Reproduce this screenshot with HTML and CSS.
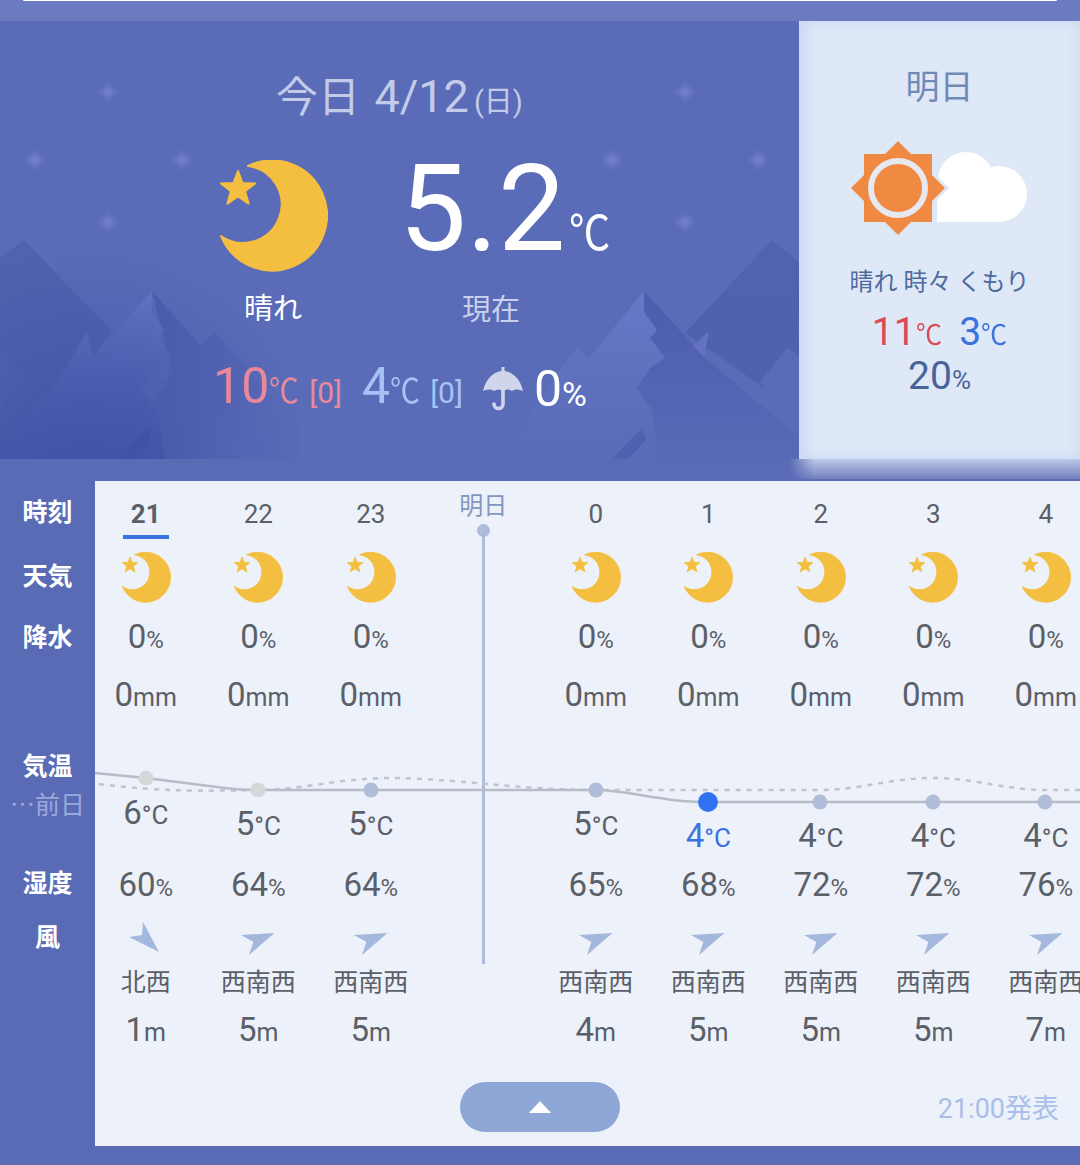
FILE: index.html
```html
<!DOCTYPE html>
<html lang="ja">
<head>
  <meta charset="UTF-8">
  <title>天気予報</title>
  <link rel="stylesheet" href="styles.css">
</head>
<body>
  <svg class="defs" width="0" height="0">
    <symbol id="moon" viewBox="0 0 110 112">
      <path fill="#f4bf40" stroke="#f4bf40" stroke-width="2" stroke-linejoin="round" d="M30 6A38.6 38.6 0 1 1 3 76A55 55 0 1 0 30 6Z"/>
      <path fill="#f4bf40" stroke="#f4bf40" stroke-width="2" stroke-linejoin="round" d="M20 11L24.4 22.9L37.1 23.4L27.1 31.3L30.6 43.6L20 36.5L9.4 43.6L12.9 31.3L2.9 23.4L15.6 22.9Z"/>
    </symbol>
    <symbol id="wind-wsw" viewBox="-18 -20 36 40">
      <path fill="#a3b8dc" d="M-17-5L16.5-7L-9 15L-4.6 2Z"/>
    </symbol>
    <symbol id="wind-nw" viewBox="-18 -20 36 40">
      <path fill="#a3b8dc" d="M-17-3L-4-5L-3-18L13 12Z"/>
    </symbol>
  </svg>

  <div class="topbar"><div class="topbar-edge"></div></div>

  <section class="hero">
    <div class="today">
      <svg class="scenery" viewBox="0 21 799 438" width="799" height="438">
        <defs>
          <linearGradient id="tree-left" gradientUnits="userSpaceOnUse" x1="0" y1="291" x2="0" y2="459">
            <stop offset="0" stop-color="#6778c6"/>
            <stop offset=".5" stop-color="#5768b8"/>
            <stop offset="1" stop-color="#4858a9"/>
          </linearGradient>
          <linearGradient id="tree-right" gradientUnits="userSpaceOnUse" x1="0" y1="291" x2="0" y2="459">
            <stop offset="0" stop-color="#6778c6"/>
            <stop offset=".6" stop-color="#5e6fbc"/>
            <stop offset="1" stop-color="#5a6bb8"/>
          </linearGradient>
          <linearGradient id="back-left" gradientUnits="userSpaceOnUse" x1="150" y1="300" x2="250" y2="440">
            <stop offset="0" stop-color="#4b5cad"/>
            <stop offset="1" stop-color="#4f60b0" stop-opacity="0"/>
          </linearGradient>
          <linearGradient id="back-right" gradientUnits="userSpaceOnUse" x1="0" y1="291" x2="0" y2="459">
            <stop offset="0" stop-color="#4c5dae"/>
            <stop offset=".6" stop-color="#5364b2"/>
            <stop offset="1" stop-color="#5869b6"/>
          </linearGradient>
          <linearGradient id="peak" gradientUnits="userSpaceOnUse" x1="0" y1="240" x2="0" y2="440">
            <stop offset="0" stop-color="#5162ae"/>
            <stop offset="1" stop-color="#4f60ad"/>
          </linearGradient>
          <radialGradient id="dusk" gradientUnits="userSpaceOnUse" cx="90" cy="475" r="230">
            <stop offset="0" stop-color="#4151a6" stop-opacity=".85"/>
            <stop offset="1" stop-color="#4151a6" stop-opacity="0"/>
          </radialGradient>
          <filter id="soft" x="-30%" y="-30%" width="160%" height="160%">
            <feGaussianBlur stdDeviation="1.4"/>
          </filter>
        </defs>
        <path fill="url(#peak)" d="M0 258L24 240L112 331L60 400L0 440Z"/>
        <path fill="#5364b2" d="M0 350L25 375L0 410Z"/>
        <path fill="url(#back-left)" d="M152 291L200 345L215 332L262 385L250 459H120L172 372Z"/>
        <path fill="url(#tree-left)" d="M152 291V312L164 330L158 338L172 358L155 372L141 388L158 415L165 459H0V440L55 385L87 332L93 357Z"/>
        <path fill="#4253a7" d="M147 428L152 442L134 459H120Z"/>

        <path fill="url(#peak)" d="M772 240L799 262V420L760 385L685 333Z"/>
        <path fill="#5a6bb8" d="M788 347L799 357V440L760 382Z"/>
        <path fill="url(#back-right)" d="M644 291L705 358L799 437V459H640L625 400Z"/>
        <path fill="url(#tree-right)" d="M644 291V312L657 330L650 338L665 358L650 368L637 388L652 410L658 459H505L555 375L578 347L587 358L590 357Z"/>
        <path fill="#6373c2" d="M709 331L693 346L704 357Z"/>
        <path fill="#5061b0" d="M642 428L646 440L628 459H612Z"/>
        <rect x="0" y="240" width="300" height="219" fill="url(#dusk)"/>

        <g filter="url(#soft)" fill="#6272bd">
          <path d="M108 81l11 11l-11 11l-11-11Z"/>
          <path d="M35 149l11 11l-11 11l-11-11Z"/>
          <path d="M182 149l11 11l-11 11l-11-11Z"/>
          <path d="M108 211l11 11l-11 11l-11-11Z"/>
          <path d="M685 81l11 11l-11 11l-11-11Z"/>
          <path d="M612 149l11 11l-11 11l-11-11Z"/>
          <path d="M759 149l11 11l-11 11l-11-11Z"/>
          <path d="M685 211l11 11l-11 11l-11-11Z"/>
        </g>
        <g filter="url(#soft)" fill="#6f7fc8">
          <path d="M108 86l6 6l-6 6l-6-6Z"/>
          <path d="M35 154l6 6l-6 6l-6-6Z"/>
          <path d="M182 154l6 6l-6 6l-6-6Z"/>
          <path d="M108 216l6 6l-6 6l-6-6Z"/>
          <path d="M685 86l6 6l-6 6l-6-6Z"/>
          <path d="M612 154l6 6l-6 6l-6-6Z"/>
          <path d="M759 154l6 6l-6 6l-6-6Z"/>
          <path d="M685 216l6 6l-6 6l-6-6Z"/>
        </g>
      </svg>
      <div class="today-inner">
        <h1 class="today-title">今日 <span class="today-date">4/12</span><small>(日)</small></h1>
        <div class="now-row">
          <div class="now-weather">
            <svg class="moon-big"><use href="#moon"/></svg>
            <div class="now-label">晴れ</div>
          </div>
          <div class="now-temp">
            <div class="temp-big">5.2<span>℃</span></div>
            <div class="now-label muted">現在</div>
          </div>
        </div>
        <div class="stats">
          <span class="stat-hi">10<i>℃</i><b>[0]</b></span>
          <span class="stat-lo">4<i>℃</i><b>[0]</b></span>
          <svg class="umbrella" viewBox="0 0 40 44" width="40" height="44">
            <path fill="#d0d5ea" d="M0 24C3 11 11 5 18.5 4V0H21.5V4C29 5 37 11 40 24C36 22 32 22 29 24C26 22 23 22 20 24C17 22 14 22 11 24C8 22 4 22 0 24Z"/>
            <path fill="none" stroke="#d0d5ea" stroke-width="3.6" stroke-linecap="round" d="M20 22V37a4.5 4.5 0 0 1-9 0"/>
          </svg>
          <span class="stat-rain">0<i>%</i></span>
        </div>
      </div>
    </div>

    <div class="tomorrow">
      <h2 class="tomorrow-title">明日</h2>
      <svg class="tomorrow-icon" viewBox="851 141 176 94" width="176" height="94">
        <g fill="#fff">
          <circle cx="966" cy="180" r="28"/>
          <circle cx="999" cy="194" r="28"/>
          <rect x="937" y="180" width="60" height="42"/>
        </g>
        <path fill="#dfe8f7" stroke="#dfe8f7" stroke-width="6" d="M864 154H885L898 141L911 154H932V175L945 188L932 201V222H911L898 235L885 222H864V201L851 188L864 175Z"/>
        <path fill="#f08a42" d="M864 154H885L898 141L911 154H932V175L945 188L932 201V222H911L898 235L885 222H864V201L851 188L864 175Z"/>
        <circle cx="898" cy="188" r="27" fill="#f08a42" stroke="#e6e9ef" stroke-width="6"/>
      </svg>
      <div class="tomorrow-desc">晴れ 時々 くもり</div>
      <div class="tomorrow-temps">
        <span class="t-hi">11<i>℃</i></span>
        <span class="t-lo">3<i>℃</i></span>
      </div>
      <div class="tomorrow-rain">20<i>%</i></div>
    </div>
  </section>

  <div class="hero-foot"><div class="hero-foot-right"></div></div>

  <section class="forecast">
    <aside class="labels">
      <div>時刻</div>
      <div>天気</div>
      <div>降水</div>
      <div>気温</div>
      <div class="label-prev">⋯前日</div>
      <div>湿度</div>
      <div>風</div>
    </aside>

    <div class="panel">
      <svg class="chart" viewBox="95 730 985 110" width="985" height="110">
        <path class="chart-prev" d="M99 784C160 792 210 791 258 790C300 790 340 778 390 778C450 778 520 790 596 790H820C860 790 890 778 933 778C975 778 1005 790 1045 790H1080"/>
        <path class="chart-line" d="M95 773L146 778L225 788Q240 790 258 790H596C620 790 640 796 660 798Q680 802 708 802H1080"/>
        <circle cx="146" cy="778" r="7.5" fill="#d5d7d8"/>
        <circle cx="258" cy="790" r="7.5" fill="#d5d7d8"/>
        <circle cx="371" cy="790" r="7.5" fill="#afbdd9"/>
        <circle cx="596" cy="790" r="7.5" fill="#afbdd9"/>
        <circle cx="708" cy="802" r="10" fill="#3172f0"/>
        <circle cx="820" cy="802" r="7.5" fill="#afbdd9"/>
        <circle cx="933" cy="802" r="7.5" fill="#afbdd9"/>
        <circle cx="1045" cy="802" r="7.5" fill="#afbdd9"/>
      </svg>

      <div class="hours">
        <div class="col now">
          <div class="c-hour"><b>21</b></div>
          <div class="c-icon"><svg class="moon-small"><use href="#moon"/></svg></div>
          <div class="c-pct">0<i>%</i></div>
          <div class="c-mm">0<i>mm</i></div>
          <div class="c-temp t6">6<i>°C</i></div>
          <div class="c-hum">60<i>%</i></div>
          <div class="c-wind"><svg class="wind"><use href="#wind-nw"/></svg></div>
          <div class="c-dir">北西</div>
          <div class="c-speed">1<i>m</i></div>
        </div>
        <div class="col">
          <div class="c-hour">22</div>
          <div class="c-icon"><svg class="moon-small"><use href="#moon"/></svg></div>
          <div class="c-pct">0<i>%</i></div>
          <div class="c-mm">0<i>mm</i></div>
          <div class="c-temp t5">5<i>°C</i></div>
          <div class="c-hum">64<i>%</i></div>
          <div class="c-wind"><svg class="wind"><use href="#wind-wsw"/></svg></div>
          <div class="c-dir">西南西</div>
          <div class="c-speed">5<i>m</i></div>
        </div>
        <div class="col">
          <div class="c-hour">23</div>
          <div class="c-icon"><svg class="moon-small"><use href="#moon"/></svg></div>
          <div class="c-pct">0<i>%</i></div>
          <div class="c-mm">0<i>mm</i></div>
          <div class="c-temp t5">5<i>°C</i></div>
          <div class="c-hum">64<i>%</i></div>
          <div class="c-wind"><svg class="wind"><use href="#wind-wsw"/></svg></div>
          <div class="c-dir">西南西</div>
          <div class="c-speed">5<i>m</i></div>
        </div>
        <div class="col day-mark">
          <div class="day-label">明日</div>
          <div class="day-dot"></div>
          <div class="day-line"></div>
        </div>
        <div class="col">
          <div class="c-hour">0</div>
          <div class="c-icon"><svg class="moon-small"><use href="#moon"/></svg></div>
          <div class="c-pct">0<i>%</i></div>
          <div class="c-mm">0<i>mm</i></div>
          <div class="c-temp t5">5<i>°C</i></div>
          <div class="c-hum">65<i>%</i></div>
          <div class="c-wind"><svg class="wind"><use href="#wind-wsw"/></svg></div>
          <div class="c-dir">西南西</div>
          <div class="c-speed">4<i>m</i></div>
        </div>
        <div class="col">
          <div class="c-hour">1</div>
          <div class="c-icon"><svg class="moon-small"><use href="#moon"/></svg></div>
          <div class="c-pct">0<i>%</i></div>
          <div class="c-mm">0<i>mm</i></div>
          <div class="c-temp t4 lowest">4<i>°C</i></div>
          <div class="c-hum">68<i>%</i></div>
          <div class="c-wind"><svg class="wind"><use href="#wind-wsw"/></svg></div>
          <div class="c-dir">西南西</div>
          <div class="c-speed">5<i>m</i></div>
        </div>
        <div class="col">
          <div class="c-hour">2</div>
          <div class="c-icon"><svg class="moon-small"><use href="#moon"/></svg></div>
          <div class="c-pct">0<i>%</i></div>
          <div class="c-mm">0<i>mm</i></div>
          <div class="c-temp t4">4<i>°C</i></div>
          <div class="c-hum">72<i>%</i></div>
          <div class="c-wind"><svg class="wind"><use href="#wind-wsw"/></svg></div>
          <div class="c-dir">西南西</div>
          <div class="c-speed">5<i>m</i></div>
        </div>
        <div class="col">
          <div class="c-hour">3</div>
          <div class="c-icon"><svg class="moon-small"><use href="#moon"/></svg></div>
          <div class="c-pct">0<i>%</i></div>
          <div class="c-mm">0<i>mm</i></div>
          <div class="c-temp t4">4<i>°C</i></div>
          <div class="c-hum">72<i>%</i></div>
          <div class="c-wind"><svg class="wind"><use href="#wind-wsw"/></svg></div>
          <div class="c-dir">西南西</div>
          <div class="c-speed">5<i>m</i></div>
        </div>
        <div class="col">
          <div class="c-hour">4</div>
          <div class="c-icon"><svg class="moon-small"><use href="#moon"/></svg></div>
          <div class="c-pct">0<i>%</i></div>
          <div class="c-mm">0<i>mm</i></div>
          <div class="c-temp t4">4<i>°C</i></div>
          <div class="c-hum">76<i>%</i></div>
          <div class="c-wind"><svg class="wind"><use href="#wind-wsw"/></svg></div>
          <div class="c-dir">西南西</div>
          <div class="c-speed">7<i>m</i></div>
        </div>
      </div>

      <div class="panel-foot">
        <button class="collapse" type="button"><span class="collapse-arrow"></span></button>
        <div class="issued">21:00発表</div>
      </div>
    </div>
  </section>
</body>
</html>
```

FILE: styles.css
```css
html, body {
  margin: 0;
  padding: 0;
}
body {
  width: 1080px;
  height: 1165px;
  overflow: hidden;
  background: #5a6bb5;
  font-family: Roboto, "Noto Sans CJK JP", sans-serif;
}
i {
  font-style: normal;
}
.defs {
  position: absolute;
}

/* top strip */
.topbar {
  height: 21px;
  background: #6b7bc2;
  padding: 0 23px 0 23px;
}
.topbar-edge {
  height: 1px;
  background: #fff;
  border-radius: 0 0 6px 6px;
}

/* today + tomorrow */
.hero {
  display: flex;
  height: 438px;
}
.today {
  position: relative;
  width: 799px;
  background: #5a6cb7;
  overflow: hidden;
}
.scenery {
  position: absolute;
  left: 0;
  top: 0;
}
.today-inner {
  position: relative;
  padding-top: 50px;
}
.today-title {
  margin: 0;
  text-align: center;
  font-size: 42px;
  line-height: 52px;
  font-weight: 400;
  color: #c3cbe8;
}
.today-date {
  font-size: 45px;
  font-weight: 400;
  margin-left: 4px;
}
.today-title small {
  font-size: 29px;
  font-weight: 400;
  margin-left: 5px;
}
.now-row {
  display: flex;
  margin-top: 32px;
  padding-left: 218px;
}
.now-weather {
  width: 110px;
}
.moon-big {
  display: block;
  width: 110px;
  height: 112px;
}
.now-label {
  font-size: 29px;
  line-height: 36px;
  color: #fff;
  text-align: center;
  margin-top: 19px;
}
.now-label.muted {
  color: #c9d0ec;
  width: 184px;
  margin-top: 34px;
}
.now-temp {
  margin-left: 71px;
  padding-top: 1px;
}
.temp-big {
  font-size: 120px;
  line-height: 96px;
  color: #fff;
  white-space: nowrap;
}
.temp-big span {
  display: inline-block;
  font-size: 48px;
  line-height: 48px;
  transform: scaleX(.86);
  transform-origin: 0 100%;
  margin-left: 3px;
}
.stats {
  display: flex;
  justify-content: center;
  align-items: center;
  margin-top: 33px;
  padding-left: 1px;
  height: 56px;
  font-size: 50px;
  line-height: 56px;
}
.stats i {
  display: inline-block;
  font-size: 34px;
  line-height: 34px;
  transform: scaleX(.88);
  transform-origin: 0 100%;
  margin-right: -4px;
}
.stats b {
  font-size: 30px;
  font-weight: 400;
  margin-left: 10px;
}
.stat-hi {
  color: #e8899b;
}
.stat-lo {
  color: #a6c2f5;
  margin-left: 20px;
}
.umbrella {
  margin: 0 11px 0 20px;
}
.stat-rain {
  color: #fff;
}
.stats .stat-rain i {
  transform: none;
  margin-right: 0;
}

.tomorrow {
  flex: 1;
  background: #dfe8f7;
  box-shadow: inset 8px 0 14px #cbd9f4, inset -6px 0 10px #d5e0f3;
  text-align: center;
  color: #4e6a9c;
}
.tomorrow-title {
  margin: 0;
  padding-top: 44px;
  font-size: 34px;
  line-height: 44px;
  font-weight: 400;
  color: #6f8ab8;
}
.tomorrow-icon {
  display: block;
  margin: 32px 0 0 52px;
}
.tomorrow-desc {
  margin-top: 29px;
  font-size: 24px;
  line-height: 36px;
}
.tomorrow-temps {
  margin-top: 9px;
  font-size: 39px;
  line-height: 46px;
}
.tomorrow-temps i {
  display: inline-block;
  font-size: 28px;
  line-height: 28px;
  transform: scaleX(.93);
  transform-origin: 0 100%;
  margin-right: -2px;
}
.t-hi {
  color: #dc4a55;
}
.t-lo {
  color: #3b72dc;
  margin-left: 8px;
}
.tomorrow-rain {
  margin-top: -1px;
  font-size: 39px;
  line-height: 44px;
  color: #466498;
}
.tomorrow-rain i {
  font-size: 26px;
}

.hero-foot {
  display: flex;
  justify-content: flex-end;
  height: 21px;
  background: #5a6bb5;
  margin-bottom: 1px;
}
.hero-foot-right {
  width: 290px;
  background:
    linear-gradient(90deg, #5a6cb7, rgba(90, 108, 183, 0) 24px),
    linear-gradient(180deg, #bdc9e7, #7280bf 95%, #4f5fa8);
}

/* hourly table */
.forecast {
  display: flex;
  height: 665px;
}
.labels {
  width: 95px;
  flex: none;
  font-size: 25px;
  line-height: 30px;
  font-weight: 700;
  color: #fff;
  text-align: center;
}
.labels div:nth-child(1) { margin-top: 17px; }
.labels div:nth-child(2) { margin-top: 34px; }
.labels div:nth-child(3) { margin-top: 31px; }
.labels div:nth-child(4) { margin-top: 99px; }
.labels div:nth-child(5) { margin-top: 9px; }
.labels div:nth-child(6) { margin-top: 48px; }
.labels div:nth-child(7) { margin-top: 24px; }
.labels .label-prev {
  font-weight: 400;
  color: #9aa9dc;
}
.panel {
  position: relative;
  flex: 1;
  min-width: 0;
  background: #edf1fa;
  overflow: hidden;
}
.chart {
  position: absolute;
  left: 0;
  top: 249px;
}
.chart-line {
  fill: none;
  stroke: #b8bcc8;
  stroke-width: 2.5;
}
.chart-prev {
  fill: none;
  stroke: #bfc3cc;
  stroke-width: 2.5;
  stroke-dasharray: 5 6;
}
.hours {
  display: flex;
  margin-left: -5.5px;
  height: 579px;
}
.col {
  flex: none;
  width: 112.5px;
  text-align: center;
  color: #5a5f68;
  white-space: nowrap;
  font-size: 33px;
}
.c-hour {
  height: 41px;
  padding-top: 18px;
  font-size: 26px;
  line-height: 30px;
}
.c-hour b {
  display: block;
}
.now .c-hour b::after {
  content: "";
  display: block;
  width: 46px;
  height: 4px;
  margin: 6px auto 0;
  background: #3a72e0;
}
.c-icon {
  height: 74px;
  display: flex;
  align-items: center;
  justify-content: center;
}
.moon-small {
  width: 50px;
  height: 51px;
}
.c-pct {
  height: 46px;
  line-height: 46px;
}
.c-mm {
  height: 70px;
  line-height: 70px;
}
.c-pct i, .c-hum i {
  font-size: 24px;
}
.c-mm i, .c-speed i {
  font-size: 25px;
}
.c-temp {
  position: relative;
  height: 125px;
  box-sizing: border-box;
  line-height: 40px;
}
.c-temp i {
  font-size: 26px;
}
.t6 { padding-top: 63px; }
.t5 { padding-top: 74px; }
.t4 { padding-top: 86px; }
.lowest { color: #3b72dc; }
.c-hum {
  height: 60px;
  line-height: 60px;
}
.c-wind {
  height: 50px;
  display: flex;
  align-items: center;
  justify-content: center;
}
.wind {
  width: 36px;
  height: 40px;
}
.c-dir {
  height: 35px;
  line-height: 35px;
  font-size: 25px;
}
.c-speed {
  height: 60px;
  line-height: 60px;
}
.day-mark {
  display: flex;
  flex-direction: column;
  align-items: center;
  height: 483px;
  padding-top: 12px;
  box-sizing: border-box;
}
.day-label {
  font-size: 24px;
  line-height: 26px;
  color: #8197bf;
}
.day-dot {
  width: 13px;
  height: 13px;
  border-radius: 50%;
  background: #aebcdb;
  margin-top: 5px;
  flex: none;
}
.day-line {
  flex: 1;
  width: 3px;
  margin-top: -2px;
  background: #aebcdb;
}
.panel-foot {
  display: flex;
  align-items: flex-start;
  height: 86px;
  box-sizing: border-box;
  padding: 22px 21px 0 365px;
}
.collapse {
  width: 160px;
  height: 50px;
  padding: 0;
  border: none;
  border-radius: 25px;
  background: #8fa7d6;
  display: flex;
  align-items: center;
  justify-content: center;
}
.collapse-arrow {
  width: 0;
  height: 0;
  border-left: 11px solid transparent;
  border-right: 11px solid transparent;
  border-bottom: 12px solid #fff;
}
.issued {
  margin-left: auto;
  padding-top: 9px;
  font-size: 27px;
  line-height: 36px;
  color: #a9c0e8;
}
```
